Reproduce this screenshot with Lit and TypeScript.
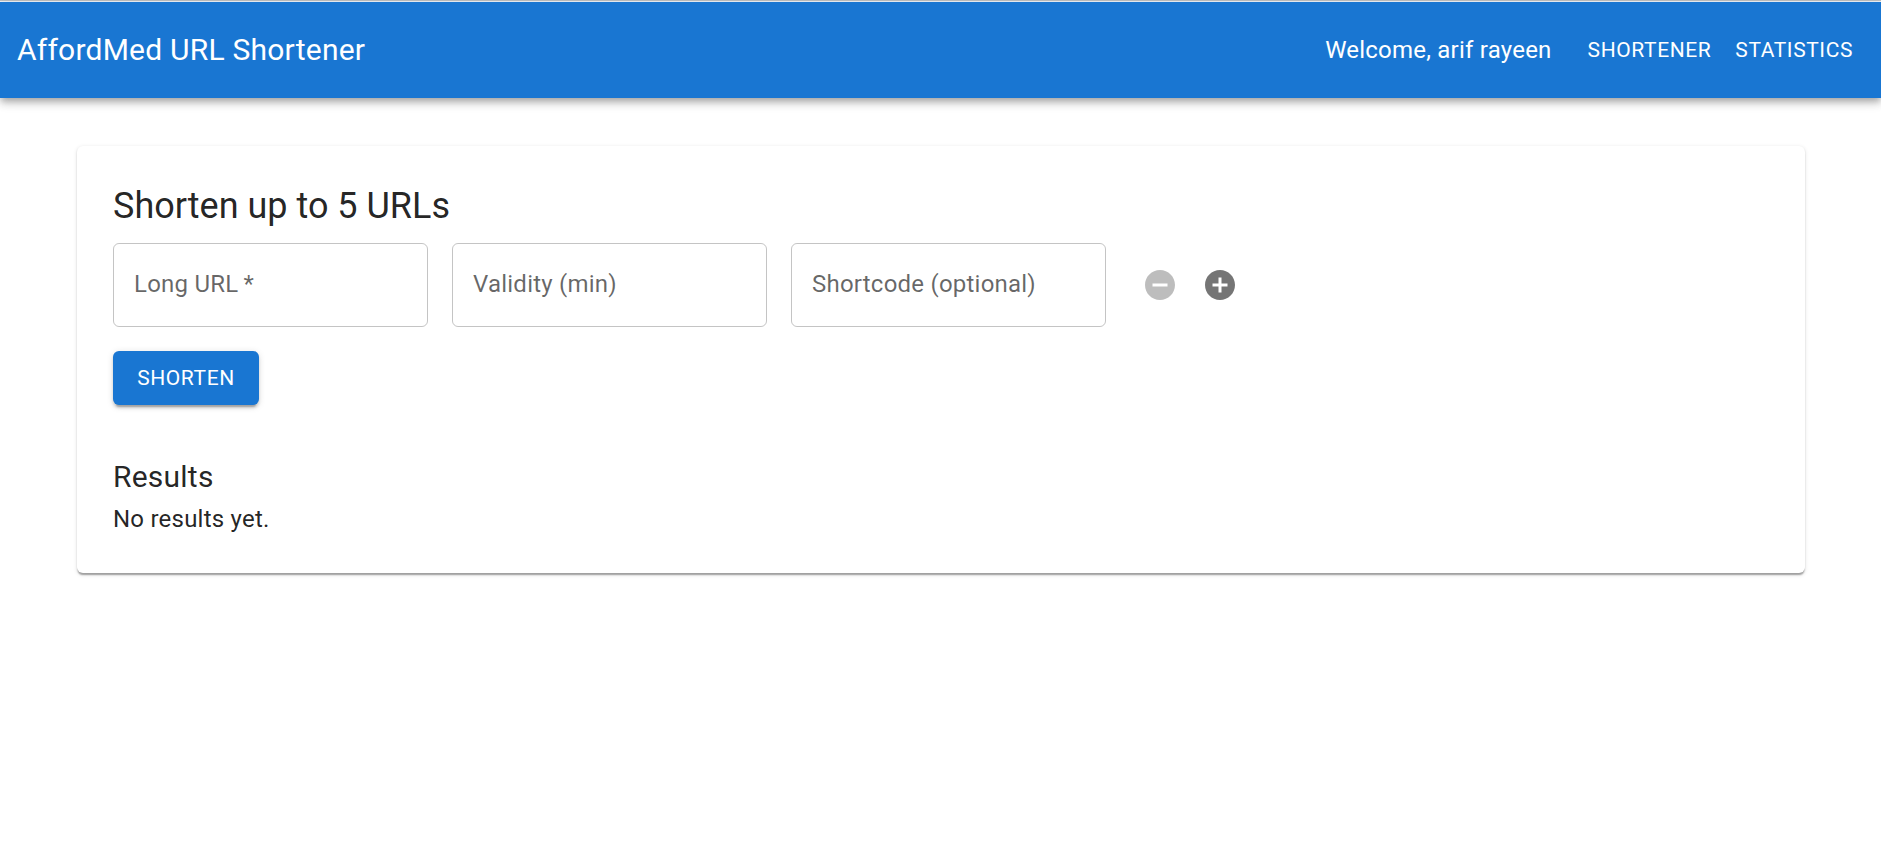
import { LitElement, html, css, svg } from "lit";
import { customElement, property } from "lit/decorators.js";

const REMOVE = "M12 2C6.48 2 2 6.48 2 12s4.48 10 10 10 10-4.48 10-10S17.52 2 12 2m5 11H7v-2h10z";
const ADD = "M12 2C6.48 2 2 6.48 2 12s4.48 10 10 10 10-4.48 10-10S17.52 2 12 2m5 11h-4v4h-2v-4H7v-2h4V7h2v4h4z";

@customElement("url-field")
class UrlField extends LitElement {
  @property() label = "";
  @property({ type: Boolean }) required = false;

  static styles = css`
    :host { display: block; width: 315px; }
    .field {
      box-sizing: border-box;
      height: 84px;
      padding: 0 20px;
      display: flex;
      align-items: center;
      border: 1px solid rgba(0, 0, 0, 0.23);
      border-radius: 6px;
    }
    .label {
      font-size: 24px;
      line-height: 34.5px;
      letter-spacing: 0.00938em;
      color: rgba(0, 0, 0, 0.6);
      white-space: nowrap;
    }
  `;

  render() {
    return html`<div class="field"><span class="label">${this.label}${this.required ? html`&thinsp;*` : ""}</span></div>`;
  }
}

@customElement("app-root")
class AppRoot extends LitElement {
  static styles = css`
    :host {
      display: block;
      height: 851px;
      overflow: hidden;
      background: #fff;
      color: rgba(0, 0, 0, 0.87);
      font-family: Roboto, "Liberation Sans", sans-serif;
      font-size: 24px;
      line-height: 1.5;
      letter-spacing: 0.00938em;
    }
    .edge { height: 1px; background: #c0c0c0; border-bottom: 1px solid #eef3f9; }
    .bar {
      height: 96px;
      box-sizing: border-box;
      padding: 0 16px 0 17px;
      display: flex;
      align-items: center;
      background: #1976d2;
      color: #fff;
      box-shadow: 0 3px 6px -1.5px rgba(0, 0, 0, 0.2), 0 6px 7.5px 0 rgba(0, 0, 0, 0.14), 0 1.5px 15px 0 rgba(0, 0, 0, 0.12);
    }
    .brand { flex: 1; font-size: 30px; font-weight: 400; line-height: 1.6; letter-spacing: 0.0075em; margin: 0; }
    .welcome { margin-right: 24px; }
    button {
      font-family: inherit;
      border: 0;
      margin: 0;
      background: none;
      color: inherit;
    }
    .nav, .submit {
      font-size: 21px;
      font-weight: 400;
      line-height: 1.75;
      letter-spacing: 0.02857em;
      text-transform: uppercase;
    }
    .nav { padding: 9px 12px; }
    .card {
      box-sizing: border-box;
      width: 1728px;
      margin: 48px 0 0 77px;
      padding: 36px;
      border-radius: 6px;
      box-shadow: 0 3px 1.5px -1.5px rgba(0, 0, 0, 0.2), 0 1.5px 1.5px 0 rgba(0, 0, 0, 0.14), 0 1.5px 4.5px 0 rgba(0, 0, 0, 0.12);
    }
    .title { margin: 0 0 12.6px; font-size: 36px; font-weight: 400; line-height: 48px; letter-spacing: 0; }
    .row { display: flex; align-items: center; gap: 24px; margin-bottom: 24px; }
    .actions { display: flex; }
    .icon { display: flex; padding: 12px; color: rgba(0, 0, 0, 0.54); }
    .icon:disabled { color: rgba(0, 0, 0, 0.26); }
    .icon svg { width: 36px; height: 36px; fill: currentColor; }
    .submit {
      display: block;
      min-width: 146px;
      padding: 9px 24px;
      border-radius: 6px;
      background: #1976d2;
      color: #fff;
      box-shadow: 0 4.5px 1.5px -3px rgba(0, 0, 0, 0.2), 0 3px 3px 0 rgba(0, 0, 0, 0.14), 0 1.5px 7.5px 0 rgba(0, 0, 0, 0.12);
    }
    .results { margin: 48px 0 0; font-size: 30px; font-weight: 400; line-height: 48px; letter-spacing: 0.0075em; }
    .empty { margin: 0; }
  `;

  private icon(d: string) {
    return svg`<svg viewBox="0 0 24 24"><path d=${d}></path></svg>`;
  }

  render() {
    return html`
      <div class="edge"></div>
      <header class="bar">
        <h6 class="brand">AffordMed URL Shortener</h6>
        <span class="welcome">Welcome, arif rayeen</span>
        <button class="nav">Shortener</button>
        <button class="nav">Statistics</button>
      </header>
      <main class="card">
        <h5 class="title">Shorten up to 5 URLs</h5>
        <div class="row">
          <url-field label="Long URL" required></url-field>
          <url-field label="Validity (min)"></url-field>
          <url-field label="Shortcode (optional)"></url-field>
          <div class="actions">
            <button class="icon" aria-label="Remove" disabled>${this.icon(REMOVE)}</button>
            <button class="icon" aria-label="Add">${this.icon(ADD)}</button>
          </div>
        </div>
        <button class="submit">Shorten</button>
        <h6 class="results">Results</h6>
        <p class="empty">No results yet.</p>
      </main>
    `;
  }
}
